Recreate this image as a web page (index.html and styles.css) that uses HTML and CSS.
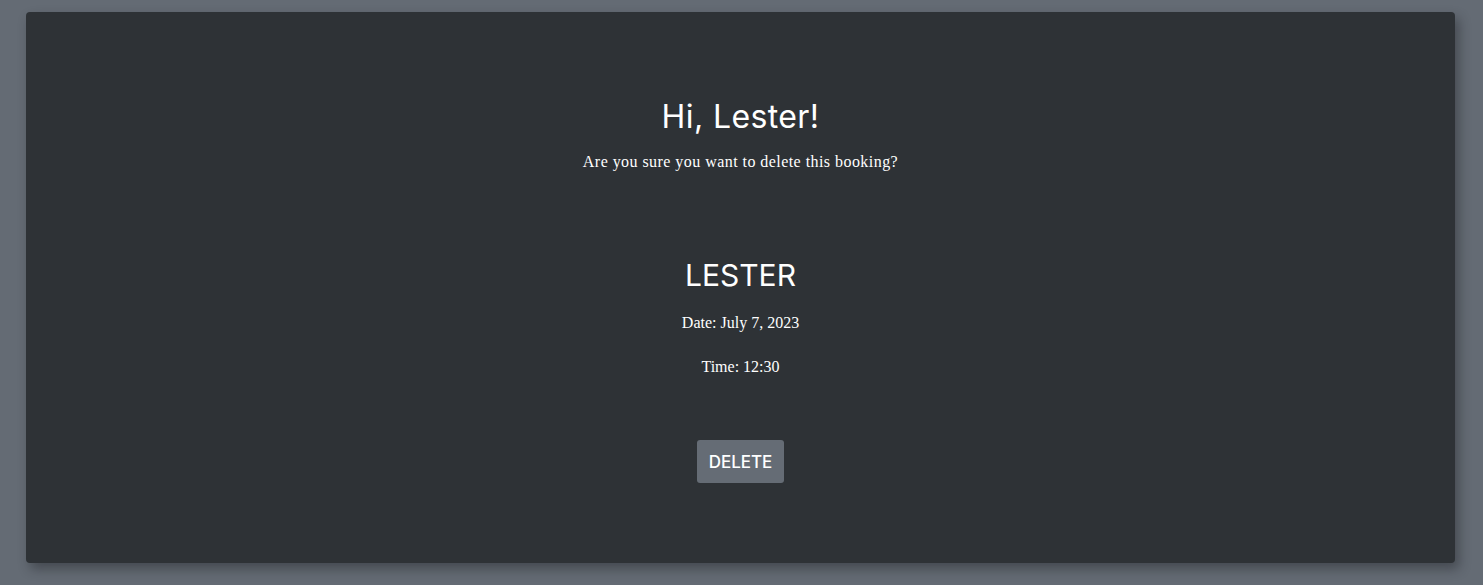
FILE: index.html
```html
<!DOCTYPE html>
<html>
<head>
<meta charset="utf-8">
<link rel="stylesheet" href="styles.css">
</head>
<body>
<main class="page">
  <section class="card">
    <h1 class="greeting">Hi, Lester!</h1>
    <p class="lead">Are you sure you want to delete this booking?</p>
    <div class="booking">
      <h2 class="name">LESTER</h2>
      <p class="detail">Date: July 7, 2023</p>
      <p class="detail">Time: 12:30</p>
    </div>
    <button class="btn-delete" type="button">DELETE</button>
  </section>
</main>
</body>
</html>
```

FILE: styles.css
```css
html, body {
  margin: 0;
  padding: 0;
}
body {
  background: #646b74;
  color: #ffffff;
  font-family: "Liberation Serif", "DejaVu Serif", serif;
}
.page {
  padding: 12px 28px 22px 26px;
}
.card {
  background: #2e3236;
  border-radius: 4px;
  box-shadow: 4px 6px 12px rgba(30, 34, 38, 0.45);
  height: 551px;
  box-sizing: border-box;
  padding-top: 85px;
  display: flex;
  flex-direction: column;
  align-items: center;
  text-align: center;
}
.greeting {
  font-family: "Inter", "Noto Sans", sans-serif;
  font-weight: 400;
  font-size: 32px;
  line-height: 40px;
  margin: 0;
  letter-spacing: 0.4px;
}
.lead {
  font-size: 16px;
  line-height: 20px;
  letter-spacing: 0.45px;
  margin: 15px 0 0;
}
.booking {
  margin-top: 85px;
  display: flex;
  flex-direction: column;
  align-items: center;
}
.name {
  font-family: "Inter", "Noto Sans", sans-serif;
  font-weight: 400;
  font-size: 30px;
  line-height: 36px;
  letter-spacing: 0;
  margin: 0;
}
.detail {
  font-size: 16px;
  line-height: 20px;
  margin: 20px 0 0;
}
.detail + .detail {
  margin-top: 24px;
}
.btn-delete {
  margin-top: 63px;
  width: 87px;
  height: 43px;
  background: #656c75;
  border: none;
  border-radius: 3px;
  color: #ffffff;
  font-family: "Inter", "Noto Sans", sans-serif;
  font-size: 17px;
  font-weight: 500;
  padding: 0;
}
```
